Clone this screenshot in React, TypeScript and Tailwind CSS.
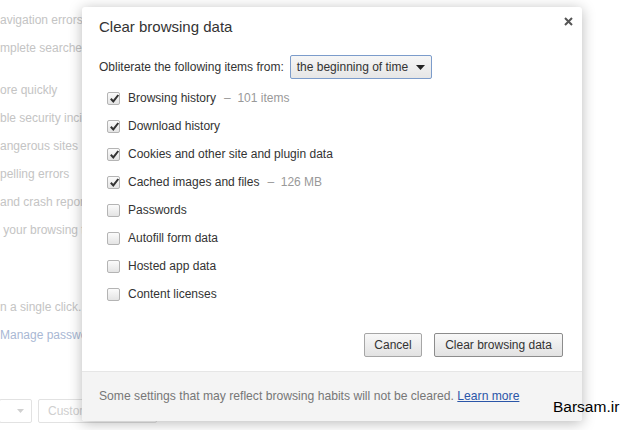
import React from 'react';

const font = { fontFamily: '"Liberation Sans", Arial, sans-serif' };

interface Item {
  label: string;
  extra?: string;
  checked: boolean;
}

const items: Item[] = [
  { label: 'Browsing history', extra: '101 items', checked: true },
  { label: 'Download history', checked: true },
  { label: 'Cookies and other site and plugin data', checked: true },
  { label: 'Cached images and files', extra: '126 MB', checked: true },
  { label: 'Passwords', checked: false },
  { label: 'Autofill form data', checked: false },
  { label: 'Hosted app data', checked: false },
  { label: 'Content licenses', checked: false },
];

const Checkbox: React.FC<{ checked: boolean }> = ({ checked }) => (
  <span className="relative w-[13px] h-[13px] rounded-[2px] border border-[#b4b4b4] bg-gradient-to-b from-[#fbfbfb] to-[#e4e4e4] shrink-0">
    {checked && (
      <svg className="absolute left-[1px] top-[0px]" width="11" height="11" viewBox="0 0 11 11">
        <path d="M1.8 5.8 L4.3 8.4 L9.3 2" fill="none" stroke="#333" strokeWidth="2" />
      </svg>
    )}
  </span>
);

const Row: React.FC<{ item: Item }> = ({ item }) => (
  <div className="flex items-center h-[28px] pl-[8px]">
    <Checkbox checked={item.checked} />
    <span className="ml-[8px] text-[12px] text-[#333]">{item.label}</span>
    {item.extra && (
      <span className="ml-[8px] text-[12px] text-[#999]">
        –&nbsp;&nbsp;{item.extra}
      </span>
    )}
  </div>
);

const Background: React.FC = () => {
  const lines1 = ['avigation errors', 'mplete searches'];
  const lines2 = [
    'ore quickly',
    'ble security incidents',
    'angerous sites',
    'pelling errors',
    'and crash reports',
    ' your browsing traffic',
  ];
  return (
    <div className="pt-[6px] text-[12px] text-[#c4c4c4] whitespace-pre">
      {lines1.map((l) => (
        <div key={l} className="h-[28px] leading-[28px]">{l}</div>
      ))}
      <div className="mt-[14px]">
        {lines2.map((l) => (
          <div key={l} className="h-[28px] leading-[28px]">{l}</div>
        ))}
      </div>
      <div className="mt-[49px] h-[28px] leading-[28px]">n a single click.</div>
      <div className="h-[28px] leading-[28px] text-[#a9b8d4]">Manage passwords</div>
      <div className="mt-[50px] flex gap-[6px]">
        <div className="w-[33px] h-[24px] -ml-[1px] border border-[#e2e2e2] rounded-[2px] flex items-center justify-end pr-[7px]">
          <svg width="7" height="4" viewBox="0 0 7 4">
            <path d="M0 0 L7 0 L3.5 4 Z" fill="#d0d0d0" />
          </svg>
        </div>
        <div className="w-[119px] h-[24px] border border-[#e2e2e2] rounded-[2px] pl-[9px] leading-[22px] text-[#cfcfcf]">
          Customize
        </div>
      </div>
    </div>
  );
};

const App: React.FC = () => {
  return (
    <div className="relative w-[640px] h-[430px] overflow-hidden bg-white" style={font}>
      <Background />

      <div className="absolute left-[82px] top-[7px] w-[500px] h-[414px] bg-white rounded-[3px] shadow-[0_2px_14px_rgba(0,0,0,0.28)] flex flex-col overflow-hidden">
        <div className="relative pt-[10px] pl-[17px] h-[48px]">
          <h2 className="text-[15px] leading-[20px] text-[#333]">Clear browsing data</h2>
          <button className="absolute right-[8px] top-[8px] w-[12px] h-[12px] flex items-center justify-center">
            <svg width="9" height="9" viewBox="0 0 9 9">
              <path d="M1 1 L8 8 M8 1 L1 8" stroke="#555" strokeWidth="2" />
            </svg>
          </button>
        </div>

        <div className="pl-[17px] pr-[18px] flex-1 flex flex-col">
          <div className="flex items-center h-[24px]">
            <span className="text-[12px] text-[#333]">Obliterate the following items from:</span>
            <div className="ml-[6px] w-[142px] h-[24px] rounded-[2px] border border-[#7c9ccb] bg-gradient-to-b from-[#f6f6f6] to-[#e6e6e6] flex items-center pl-[6px] pr-[6px] justify-between">
              <span className="text-[12px] text-[#333]">the beginning of time</span>
              <svg width="9" height="5" viewBox="0 0 9 5">
                <path d="M0 0 L9 0 L4.5 5 Z" fill="#222" />
              </svg>
            </div>
          </div>

          <div className="mt-[5px]">
            {items.map((it) => (
              <Row key={it.label} item={it} />
            ))}
          </div>

          <div className="mt-[25px] flex justify-end gap-[12px] pr-[1px]">
            <button className="w-[58px] h-[24px] rounded-[2px] border border-[#a6a6a6] bg-gradient-to-b from-[#f8f8f8] to-[#e2e2e2] text-[12px] text-[#333]">
              Cancel
            </button>
            <button className="w-[129px] h-[24px] rounded-[2px] border border-[#8c8c8c] bg-gradient-to-b from-[#f8f8f8] to-[#e2e2e2] text-[12px] text-[#333]">
              Clear browsing data
            </button>
          </div>
        </div>

        <div className="h-[50px] border-t border-[#e6e6e6] bg-[#f4f4f4] flex items-center pl-[17px]">
          <span className="text-[12.15px] text-[#777]">
            Some settings that may reflect browsing habits will not be cleared.{' '}
            <a className="text-[#2b56a8] underline">Learn more</a>
          </span>
        </div>
      </div>

      <div className="absolute left-[553px] top-[395px] text-[15.5px] text-black">Barsam.ir</div>
    </div>
  );
};

export default App;
